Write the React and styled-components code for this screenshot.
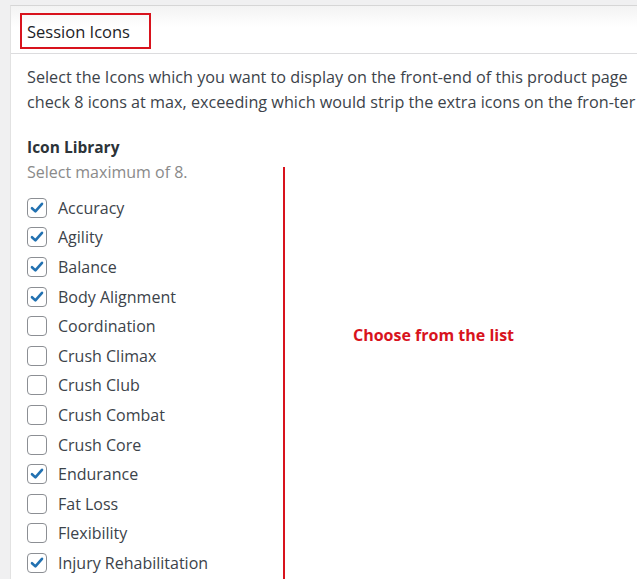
import React from "react";
import styled, { createGlobalStyle } from "styled-components";

const GlobalStyle = createGlobalStyle`
  html, body {
    margin: 0;
    padding: 0;
    background: #f0f0f1;
    overflow: hidden;
  }
  body {
    font-family: "Open Sans", "Noto Sans", Arial, sans-serif;
    color: #3c434a;
  }
`;

const icons = [
  { name: "Accuracy", checked: true },
  { name: "Agility", checked: true },
  { name: "Balance", checked: true },
  { name: "Body Alignment", checked: true },
  { name: "Coordination", checked: false },
  { name: "Crush Climax", checked: false },
  { name: "Crush Club", checked: false },
  { name: "Crush Combat", checked: false },
  { name: "Crush Core", checked: false },
  { name: "Endurance", checked: true },
  { name: "Fat Loss", checked: false },
  { name: "Flexibility", checked: false },
  { name: "Injury Rehabilitation", checked: true },
];

const Page = styled.div`
  padding: 5px 0 0 10px;
  height: 579px;
  box-sizing: border-box;
  overflow: hidden;
`;

const Panel = styled.div`
  width: 627px;
  height: 574px;
  overflow: hidden;
  background: #fff;
  border-top: 1px solid #d6d6d6;
  border-left: 1px solid #e2e2e2;
`;

const Header = styled.div`
  height: 48px;
  box-sizing: border-box;
  padding: 7px 9px;
  background: linear-gradient(to bottom, #f3f3f3 0%, #ffffff 45%);
  border-bottom: 1px solid #dcdcde;
`;

const TitleBox = styled.div`
  display: inline-flex;
  align-items: center;
  width: 131px;
  height: 36px;
  box-sizing: border-box;
  border: 2px solid #d8131d;
  padding-left: 5px;
  font-size: 16.5px;
  color: #1d2327;
`;

const Body = styled.div`
  padding: 11px 16px 0;
`;

const Description = styled.p`
  margin: 0;
  font-size: 16.2px;
  line-height: 25px;
  white-space: nowrap;
  color: #3c434a;
`;

const Heading = styled.h4`
  margin: 20px 0 0;
  font-size: 15.5px;
  line-height: 24px;
  font-weight: 700;
  color: #2c3338;
`;

const Row = styled.div`
  display: flex;
`;

const ListColumn = styled.div`
  width: 256px;
`;

const Hint = styled.div`
  font-size: 16px;
  line-height: 24px;
  color: #8a8a8a;
  margin: 1px 0 9px;
`;

const Option = styled.label`
  display: flex;
  align-items: center;
  height: 29.6px;
  font-size: 16px;
  color: #3c434a;
`;

const Box = styled.span`
  display: inline-flex;
  align-items: center;
  justify-content: center;
  width: 20px;
  height: 20px;
  box-sizing: border-box;
  border: 1px solid #8c8f94;
  border-radius: 4px;
  margin-right: 11px;
  background: #fff;
`;

const Annotation = styled.div`
  margin-top: 8px;
  border-left: 2px solid #d8131d;
  padding: 157px 0 0 68px;
  height: 600px;
`;

const Note = styled.div`
  font-size: 16px;
  font-weight: 700;
  color: #d8131d;
`;

const Check = () => (
  <svg width="16" height="16" viewBox="0 0 16 16">
    <path
      d="M3 8.2 L6.4 11.4 L13 3.8"
      fill="none"
      stroke="#2271b1"
      strokeWidth="2.6"
      strokeLinecap="round"
      strokeLinejoin="round"
    />
  </svg>
);

const Checkbox = ({ checked, label }) => (
  <Option>
    <Box>{checked && <Check />}</Box>
    {label}
  </Option>
);

export default function App() {
  return (
    <>
      <GlobalStyle />
      <Page>
        <Panel>
          <Header>
            <TitleBox>Session Icons</TitleBox>
          </Header>
          <Body>
            <Description>
              Select the Icons which you want to display on the front-end of this product page
              <br />
              check 8 icons at max, exceeding which would strip the extra icons on the fron-ter
            </Description>
            <Heading>Icon Library</Heading>
            <Row>
              <ListColumn>
                <Hint>Select maximum of 8.</Hint>
                {icons.map((icon) => (
                  <Checkbox key={icon.name} checked={icon.checked} label={icon.name} />
                ))}
              </ListColumn>
              <Annotation>
                <Note>Choose from the list</Note>
              </Annotation>
            </Row>
          </Body>
        </Panel>
      </Page>
    </>
  );
}
